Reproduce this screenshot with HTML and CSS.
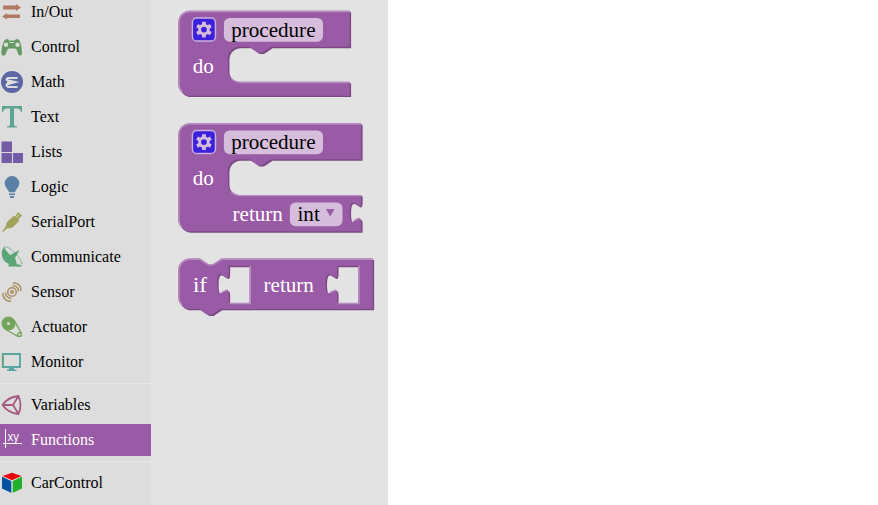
FILE: index.html
```html
<!DOCTYPE html>
<html lang="en">
<head>
<meta charset="utf-8">
<title>Block editor</title>
<link rel="stylesheet" href="styles.css">
</head>
<body>
<div class="app">
<nav class="toolbox">
<div class="row"><svg class="icon" viewBox="0 0 24 24"><path fill="#b07a60" d="M3 5.500h13V4l5 3.500-5 3.500V9.500H3zM20 14.500H7V13l-5 3.500 5 3V18h13z"/></svg><span>In/Out</span></div>
<div class="row"><svg class="icon" viewBox="0 0 24 24"><path fill="#659b62" fill-rule="evenodd" d="M6.500 4q1.500-.5 2.500 1.500h5.500Q16 3.500 17.500 4q2 .3 2.700 3 1.800 5 1.800 11 0 2.700-2 2.700-1.500 0-3-5.200-.5-1.500-2-2h-6q-1.500.5-2 2-1.500 5.200-3.500 5.200T1.300 18Q1.500 12 3.500 7 4.500 4.300 6.500 4zM6 7.500a2.200 2.200 0 1 0 .01 4.400A2.200 2.200 0 0 0 6 7.500zm11.500 0a2.200 2.200 0 1 0 .01 4.400 2.200 2.200 0 0 0-.01-4.400zM9.500 7v1h4.500V7z"/></svg><span>Control</span></div>
<div class="row"><svg class="icon" viewBox="0 0 24 24"><circle cx="12" cy="12" r="11" fill="#5b67a5"/><path d="M17.500 8H8.500Q6.500 8 6.500 9.800L15.500 12l-9 2.500Q6.500 17 9 17H17.500M7 12.300h8.500" fill="none" stroke="#dddddd" stroke-width="1.900"/></svg><span>Math</span></div>
<div class="row"><svg class="icon" viewBox="0 0 24 24"><path fill="#5ba591" d="M2 1h20v6h-1q-.5-3.500-4-3.500h-3V19q0 2.500 3 2.500V22.500H7V21.500q3 0 3-2.500V3.500H7Q3.500 3.500 3 7H2z"/></svg><span>Text</span></div>
<div class="row"><svg class="icon" viewBox="0 0 24 24"><path fill="#745ba5" d="M1.500 1.500h10.500v10.500H1.500zM1.500 13h10.500v10H1.500zM13 13h10v10H13z"/></svg><span>Lists</span></div>
<div class="row"><svg class="icon" viewBox="0 0 24 24"><path fill="#5b80a5" d="M12 1a7.300 7.300 0 0 1 7.300 7.300c0 4-3.800 6-4.300 9H9c-.5-3-4.300-5-4.300-9A7.300 7.300 0 0 1 12 1zM9 18.500h6v1.500H9zM9.500 21h5l-1 2h-3z"/></svg><span>Logic</span></div>
<div class="row"><svg class="icon" viewBox="0 0 24 24"><path fill="#a0a55b" d="M2 21.500l4-5.500q-.5-3 1.500-4.500l6-5.500 1.500.5L18 2l4 3.500-3.500 4 .5 1.500-6 6q-2 1.700-5.500 1L3 22z"/><path d="M17.700 4.500l2 2M16 6l2 2" stroke="#ddd" stroke-width=".8"/></svg><span>SerialPort</span></div>
<div class="row"><svg class="icon" viewBox="0 0 24 24"><path fill="#5ba577" d="M4 2Q1 5 2 11q1 5 7 8l-1 2.500h13L20 19.500h-3L15 13l4.500-8L10 10Q6 6 4 2z"/><path d="M4 2q4-1 11 6t7 12q-1 2-5 1" fill="none" stroke="#5ba577" stroke-width="1" stroke-dasharray="2 1"/></svg><span>Communicate</span></div>
<div class="row"><svg class="icon" viewBox="0 0 24 24" fill="none" stroke="#ab8f61" stroke-width="1.500"><circle cx="12" cy="12" r="4.300"/><circle cx="12" cy="12" r="1.300"/><path d="M12.500 5.500q5.500 0 6 6M13 2.800q8 .2 8 8.200M5.500 12.500q0 5.500 6 6M2.800 13q0 8 8.200 8.500"/></svg><span>Sensor</span></div>
<div class="row"><svg class="icon" viewBox="0 0 24 24"><path fill="#74a55b" fill-rule="evenodd" d="M8.500 1.500a7 7 0 1 1 0 14 7 7 0 0 1 0-14zm0 5.500a1.500 1.500 0 1 0 0 3 1.500 1.500 0 0 0 0-3z"/><path d="M5 14l13 7.500M14 5l7.500 13.500" stroke="#74a55b" stroke-width="1.400"/><circle cx="19.500" cy="19.500" r="1.900" fill="none" stroke="#74a55b" stroke-width="1.400"/></svg><span>Actuator</span></div>
<div class="row"><svg class="icon" viewBox="0 0 24 24"><path d="M3 4h17v13H3z" fill="none" stroke="#5ba5a0" stroke-width="1.900"/><path d="M2.300 3v15" stroke="#74a55b" stroke-width=".8"/><path d="M9 18h5v1.500h2.500v1.500H7v-1.500h2z" fill="#5ba5a0"/></svg><span>Monitor</span></div>
<div class="separator"></div>
<div class="row"><svg class="icon" viewBox="0 0 24 24" fill="none" stroke="#a55b80" stroke-width="1.800" stroke-linejoin="round"><path d="M2.500 12Q8 4 18.500 3 22.500 12 18.500 21 8 20 2.500 12H13L18.500 3M13 12l5.500 9"/></svg><span>Variables</span></div>
<div class="row selected"><svg class="icon" viewBox="0 0 24 24"><path d="M5.500 1v19M3 15.500h19" stroke="#fff" stroke-width="1"/><text x="7.500" y="13" textLength="11.500" lengthAdjust="spacingAndGlyphs" class="xy">xy</text></svg><span>Functions</span></div>
<div class="separator"></div>
<div class="row"><svg class="icon" viewBox="0 0 24 24"><path fill="#e6000a" d="M12 1.800l10 3.400L12 9.500 2 5.200z"/><path fill="#00539f" d="M2 5.500l9.500 4.500v12L2 17.500z"/><path fill="#22b02c" d="M22 5.500l-9.500 4.500v12l9.500-4.500z"/><path d="M2 5.300l10 4.400 10-4.400M12 9.500V22" fill="none" stroke="#eee" stroke-width=".7"/></svg><span>CarControl</span></div>
</nav>
<main class="flyout">
<svg class="blocks" viewBox="151 0 237 505">
<defs>
<path id="b1" d="M0 8A8 8 0 0 1 8 0H119V25H64.500l-6 4-3 0-6-4h-7a8 8 0 0 0-8 8v8.300a8 8 0 0 0 8 8H119V59H8a8 8 0 0 1-8-8z"/>
<path id="b2" d="M0 8A8 8 0 0 1 8 0H127V25H64.500l-6 4-3 0-6-4h-7a8 8 0 0 0-8 8v8.800a8 8 0 0 0 8 8H127v4.500c0 10-8-8-8 7.500s8-2.500 8 7.500V75H8a8 8 0 0 1-8-8z"/>
<path id="b3" fill-rule="evenodd" d="M0 8A8 8 0 0 1 8 0H15l6 4 3 0 6-4H135V35H29.500l-6 4-3 0-6-4H8a8 8 0 0 1-8-8zM35 5v5c0 10-8-8-8 7.500s8-2.500 8 7.500v6h14.500V5zM110.300 5v5c0 10-8-8-8 7.500s8-2.500 8 7.500v6h14.700V5z"/>
<g id="gear">
<rect class="gearbox" x=".5" y=".5" width="16" height="16" rx="3"/>
<path class="teeth" d="M8.500 3v11M3.740 5.750l9.520 5.500M3.740 11.250l9.520-5.500"/>
<circle class="ring" cx="8.500" cy="8.500" r="3"/>
</g>
</defs>
<g transform="translate(178.300 10.700) scale(1.440)">
<use href="#b1" class="dark" x="1" y="1"/><use href="#b1" class="face"/>
<path class="light" d="M2.700 56.300A7.500 7.500 0 0 1 .5 51V8A7.500 7.500 0 0 1 8 .5H118.500M36.800 47A8.500 8.500 0 0 0 42.500 49.800H118.500"/>
<use href="#gear" x="9.300" y="4.600"/>
<rect class="field" x="31.700" y="5" width="68.800" height="16.500" rx="4"/>
</g>
<text class="ink" x="231.200" y="36.600">procedure</text><text x="192.700" y="72.600">do</text>
<g transform="translate(178.300 123.200) scale(1.440)">
<use href="#b2" class="dark" x="1" y="1"/><use href="#b2" class="face"/>
<path class="light" d="M2.700 72.300A7.500 7.500 0 0 1 .5 67V8A7.500 7.500 0 0 1 8 .5H126.500M36.800 47.500A8.500 8.500 0 0 0 42.500 50.300H126.500M122 67.500l3.500-1.500"/>
<use href="#gear" x="9.300" y="4.600"/>
<rect class="field" x="31.700" y="5" width="68.800" height="16.500" rx="4"/>
<rect class="field" x="77.500" y="55" width="36.500" height="16.500" rx="4"/>
</g>
<text class="ink" x="231.200" y="148.700">procedure</text><text x="192.700" y="184.600">do</text><text x="232.500" y="220.700">return</text><text class="ink" x="297.500" y="220.700">int</text><path class="face" d="M326 209h8.500l-4.250 7.500z"/>
<g transform="translate(178.300 258.500) scale(1.440)">
<use href="#b3" class="dark" x="1" y="1"/><use href="#b3" class="face"/>
<path class="light" d="M2.700 32.300A7.500 7.500 0 0 1 .5 27V8A7.500 7.500 0 0 1 8 .5H15l6 4h3l6-4H134.500M35.500 31.300h14.500V5M110.800 31.300h14.700V5M30 23.500l4-1.500M105.300 23.500l4-1.500"/>
</g>
<text x="193" y="291.700" textLength="14" lengthAdjust="spacingAndGlyphs">if</text><text x="263.500" y="291.700">return</text>
</svg>
</main>
<div class="workspace"></div>
</div>
</body>
</html>
```
FILE: styles.css
```css
body { margin: 0; background: #fff; font-family: "Liberation Serif", serif; }
.app { display: flex; height: 505px; overflow: hidden; }
.toolbox { width: 151px; flex: none; margin-top: -4px; background: #ddd; font-size: 16px; color: #000; }
.row { display: flex; align-items: center; height: 32px; margin-bottom: 3px; white-space: nowrap; }
.row:has(+ .separator) { margin-bottom: 0; }
.icon { width: 24px; height: 24px; flex: none; margin-right: 7px; }
.selected { background: #995ba5; color: #fff; }
.xy { font: 13.500px "Open Sans", sans-serif; fill: #fff; }
.separator { height: 1px; margin: 5px 0; background: #e8e8e8; }
.flyout { width: 237px; flex: none; background: #e3e3e3; }
.workspace { flex: 1; background: #fff; }
.blocks { display: block; width: 237px; height: 505px; }
.blocks text { font-size: 21.100px; fill: #fff; }
.blocks .ink { fill: #000; }
.face { fill: #995ba5; }
.dark { fill: #7a4984; }
.light { fill: none; stroke: #b88cc0; stroke-width: 1; }
.field { fill: #d6bddb; }
.gearbox { fill: #3b20dc; stroke: #c9b0df; stroke-width: 1; }
.teeth { stroke: #d6bddb; stroke-width: 2.600; }
.ring { fill: #3b20dc; stroke: #d6bddb; stroke-width: 2; }
```
